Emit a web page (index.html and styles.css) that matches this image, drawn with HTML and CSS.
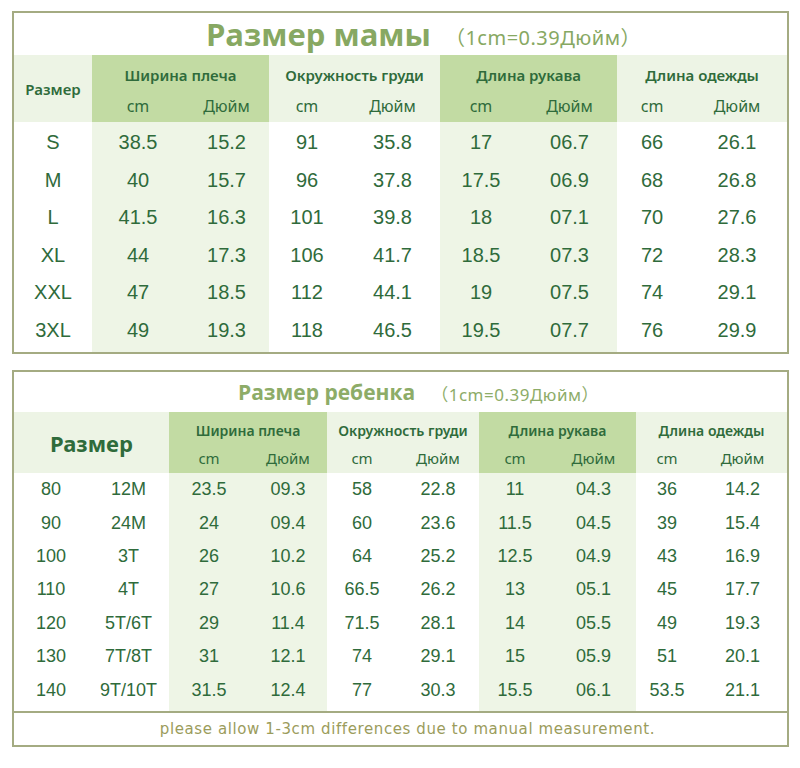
FILE: index.html
```html
<!DOCTYPE html>
<html lang="ru">
<head>
<meta charset="utf-8">
<title>Размерная таблица</title>
<link rel="stylesheet" href="styles.css">
</head>
<body>
<div class="sheet">
  <section class="box box-mom">
    <h2 class="title title-mom">Размер мамы<span class="conv">（1cm=0.39Дюйм）</span></h2>
    <table class="grid grid-mom">
      <colgroup>
        <col class="c-size">
        <col class="c-s1 hl"><col class="c-s2 hl">
        <col class="c-c1"><col class="c-c2">
        <col class="c-r1 hl"><col class="c-r2 hl">
        <col class="c-l1"><col class="c-l2">
      </colgroup>
      <thead>
        <tr class="h1">
          <th rowspan="2" class="size-head">Размер</th>
          <th colspan="2" class="dark">Ширина плеча</th>
          <th colspan="2">Окружность груди</th>
          <th colspan="2" class="dark">Длина рукава</th>
          <th colspan="2">Длина одежды</th>
        </tr>
        <tr class="h2">
          <th class="unit dark">cm</th><th class="unit dark">Дюйм</th>
          <th class="unit">cm</th><th class="unit">Дюйм</th>
          <th class="unit dark">cm</th><th class="unit dark">Дюйм</th>
          <th class="unit">cm</th><th class="unit">Дюйм</th>
        </tr>
      </thead>
      <tbody>
        <tr class="gap gap-top"><td></td><td></td><td></td><td></td><td></td><td></td><td></td><td></td><td></td></tr>
        <tr><td>S</td><td>38.5</td><td>15.2</td><td>91</td><td>35.8</td><td>17</td><td>06.7</td><td>66</td><td>26.1</td></tr>
        <tr><td>M</td><td>40</td><td>15.7</td><td>96</td><td>37.8</td><td>17.5</td><td>06.9</td><td>68</td><td>26.8</td></tr>
        <tr><td>L</td><td>41.5</td><td>16.3</td><td>101</td><td>39.8</td><td>18</td><td>07.1</td><td>70</td><td>27.6</td></tr>
        <tr><td>XL</td><td>44</td><td>17.3</td><td>106</td><td>41.7</td><td>18.5</td><td>07.3</td><td>72</td><td>28.3</td></tr>
        <tr><td>XXL</td><td>47</td><td>18.5</td><td>112</td><td>44.1</td><td>19</td><td>07.5</td><td>74</td><td>29.1</td></tr>
        <tr><td>3XL</td><td>49</td><td>19.3</td><td>118</td><td>46.5</td><td>19.5</td><td>07.7</td><td>76</td><td>29.9</td></tr>
        <tr class="gap gap-bottom"><td></td><td></td><td></td><td></td><td></td><td></td><td></td><td></td><td></td></tr>
      </tbody>
    </table>
  </section>

  <section class="box box-kid">
    <h2 class="title title-kid">Размер ребенка<span class="conv">（1cm=0.39Дюйм）</span></h2>
    <table class="grid grid-kid">
      <colgroup>
        <col class="k-a"><col class="k-b">
        <col class="k-s1 hl"><col class="k-s2 hl">
        <col class="k-c1"><col class="k-c2">
        <col class="k-r1 hl"><col class="k-r2 hl">
        <col class="k-l1"><col class="k-l2">
      </colgroup>
      <thead>
        <tr class="h1">
          <th rowspan="2" colspan="2" class="size-head">Размер</th>
          <th colspan="2" class="dark">Ширина плеча</th>
          <th colspan="2">Окружность груди</th>
          <th colspan="2" class="dark">Длина рукава</th>
          <th colspan="2">Длина одежды</th>
        </tr>
        <tr class="h2">
          <th class="unit dark">cm</th><th class="unit dark">Дюйм</th>
          <th class="unit">cm</th><th class="unit">Дюйм</th>
          <th class="unit dark">cm</th><th class="unit dark">Дюйм</th>
          <th class="unit">cm</th><th class="unit">Дюйм</th>
        </tr>
      </thead>
      <tbody>
        <tr><td>80</td><td>12M</td><td>23.5</td><td>09.3</td><td>58</td><td>22.8</td><td>11</td><td>04.3</td><td>36</td><td>14.2</td></tr>
        <tr><td>90</td><td>24M</td><td>24</td><td>09.4</td><td>60</td><td>23.6</td><td>11.5</td><td>04.5</td><td>39</td><td>15.4</td></tr>
        <tr><td>100</td><td>3T</td><td>26</td><td>10.2</td><td>64</td><td>25.2</td><td>12.5</td><td>04.9</td><td>43</td><td>16.9</td></tr>
        <tr><td>110</td><td>4T</td><td>27</td><td>10.6</td><td>66.5</td><td>26.2</td><td>13</td><td>05.1</td><td>45</td><td>17.7</td></tr>
        <tr><td>120</td><td>5T/6T</td><td>29</td><td>11.4</td><td>71.5</td><td>28.1</td><td>14</td><td>05.5</td><td>49</td><td>19.3</td></tr>
        <tr><td>130</td><td>7T/8T</td><td>31</td><td>12.1</td><td>74</td><td>29.1</td><td>15</td><td>05.9</td><td>51</td><td>20.1</td></tr>
        <tr><td>140</td><td>9T/10T</td><td>31.5</td><td>12.4</td><td>77</td><td>30.3</td><td>15.5</td><td>06.1</td><td>53.5</td><td>21.1</td></tr>
        <tr class="gap gap-kid"><td></td><td></td><td></td><td></td><td></td><td></td><td></td><td></td><td></td><td></td></tr>
      </tbody>
    </table>
    <p class="note">please allow 1-3cm differences due to manual measurement.</p>
  </section>
</div>
</body>
</html>
```

FILE: styles.css
```css
html, body {
  margin: 0;
  padding: 0;
  background: #ffffff;
}

.sheet {
  width: 800px;
  padding-top: 11px;
  display: flex;
  flex-direction: column;
  gap: 16px;
}

.box {
  box-sizing: border-box;
  width: 777px;
  margin-left: 12px;
  border: 2px solid #a4ab82;
  background: #ffffff;
}

.title {
  margin: 0;
  display: flex;
  justify-content: center;
  align-items: center;
  color: #87a862;
  font-family: "Open Sans", "Noto Sans", sans-serif;
  font-weight: 700;
  white-space: nowrap;
}

.title-mom {
  height: 42px;
  font-size: 31px;
  padding-left: 46px;
}

.title-kid {
  height: 40px;
  font-size: 21px;
  padding-left: 36px;
  color: #8dac68;
}

.conv {
  font-family: "Noto Sans", "Noto Sans CJK SC", sans-serif;
  font-weight: 400;
  margin-left: 16px;
  letter-spacing: 0.5px;
}

.title-mom .conv {
  font-size: 20px;
  margin-left: 14px;
  margin-top: 4px;
}

.title-kid .conv {
  font-size: 17px;
  margin-left: 16px;
  margin-top: 2px;
}

.grid {
  width: 773px;
  border-collapse: collapse;
  table-layout: fixed;
  color: #2f6b3b;
}

.grid th,
.grid td {
  padding: 0;
  text-align: center;
  white-space: nowrap;
}

.grid col.hl {
  background: #eef5e6;
}

.grid thead th {
  background: #edf4e5;
  font-family: "Noto Sans", "Open Sans", sans-serif;
  font-weight: 600;
}

.grid thead th.dark {
  background: #c2dba3;
}

.grid thead th.unit {
  font-weight: 400;
}

.grid tbody td {
  font-family: "Liberation Sans", Arial, sans-serif;
}

/* mom table */
.c-size { width: 78px; }
.c-s1 { width: 92px; }
.c-s2 { width: 85px; }
.c-c1 { width: 76px; }
.c-c2 { width: 95px; }
.c-r1 { width: 82px; }
.c-r2 { width: 95px; }
.c-l1 { width: 70px; }
.c-l2 { width: 100px; }

.grid-mom .h1 th {
  height: 36px;
  font-size: 15px;
  vertical-align: middle;
  padding-top: 4px;
  box-sizing: border-box;
}

.grid-mom .h2 th {
  height: 31px;
  font-size: 16px;
  padding-bottom: 2px;
  box-sizing: border-box;
}

.grid-mom .h1 th.size-head {
  font-size: 15px;
  padding-top: 0;
}

.grid-mom tbody td {
  height: 37.5px;
  font-size: 20px;
}

.grid-mom .gap-top td { height: 2px; }
.grid-mom .gap-bottom td { height: 3px; }

/* kid table */
.k-a { width: 74px; }
.k-b { width: 81px; }
.k-s1 { width: 80px; }
.k-s2 { width: 78px; }
.k-c1 { width: 70px; }
.k-c2 { width: 82px; }
.k-r1 { width: 72px; }
.k-r2 { width: 85px; }
.k-l1 { width: 62px; }
.k-l2 { width: 89px; }

.grid-kid .h1 th {
  height: 33px;
  font-size: 14px;
  padding-top: 4px;
  box-sizing: border-box;
}

.grid-kid .h2 th {
  height: 28px;
  font-size: 15px;
  padding-bottom: 2px;
  box-sizing: border-box;
}

.grid-kid .h1 th.size-head {
  font-size: 22px;
  font-weight: 700;
  padding-top: 0;
}

.grid-kid tbody td {
  height: 33.4px;
  font-size: 18px;
}

.grid-kid .gap-kid td { height: 4px; }

.note {
  margin: 0;
  height: 32px;
  border-top: 2px solid #a4ab82;
  display: flex;
  align-items: center;
  justify-content: center;
  padding-left: 14px;
  font-family: "DejaVu Sans", "Liberation Sans", sans-serif;
  font-size: 15px;
  letter-spacing: 0.6px;
  color: #9b9c5c;
}
```
